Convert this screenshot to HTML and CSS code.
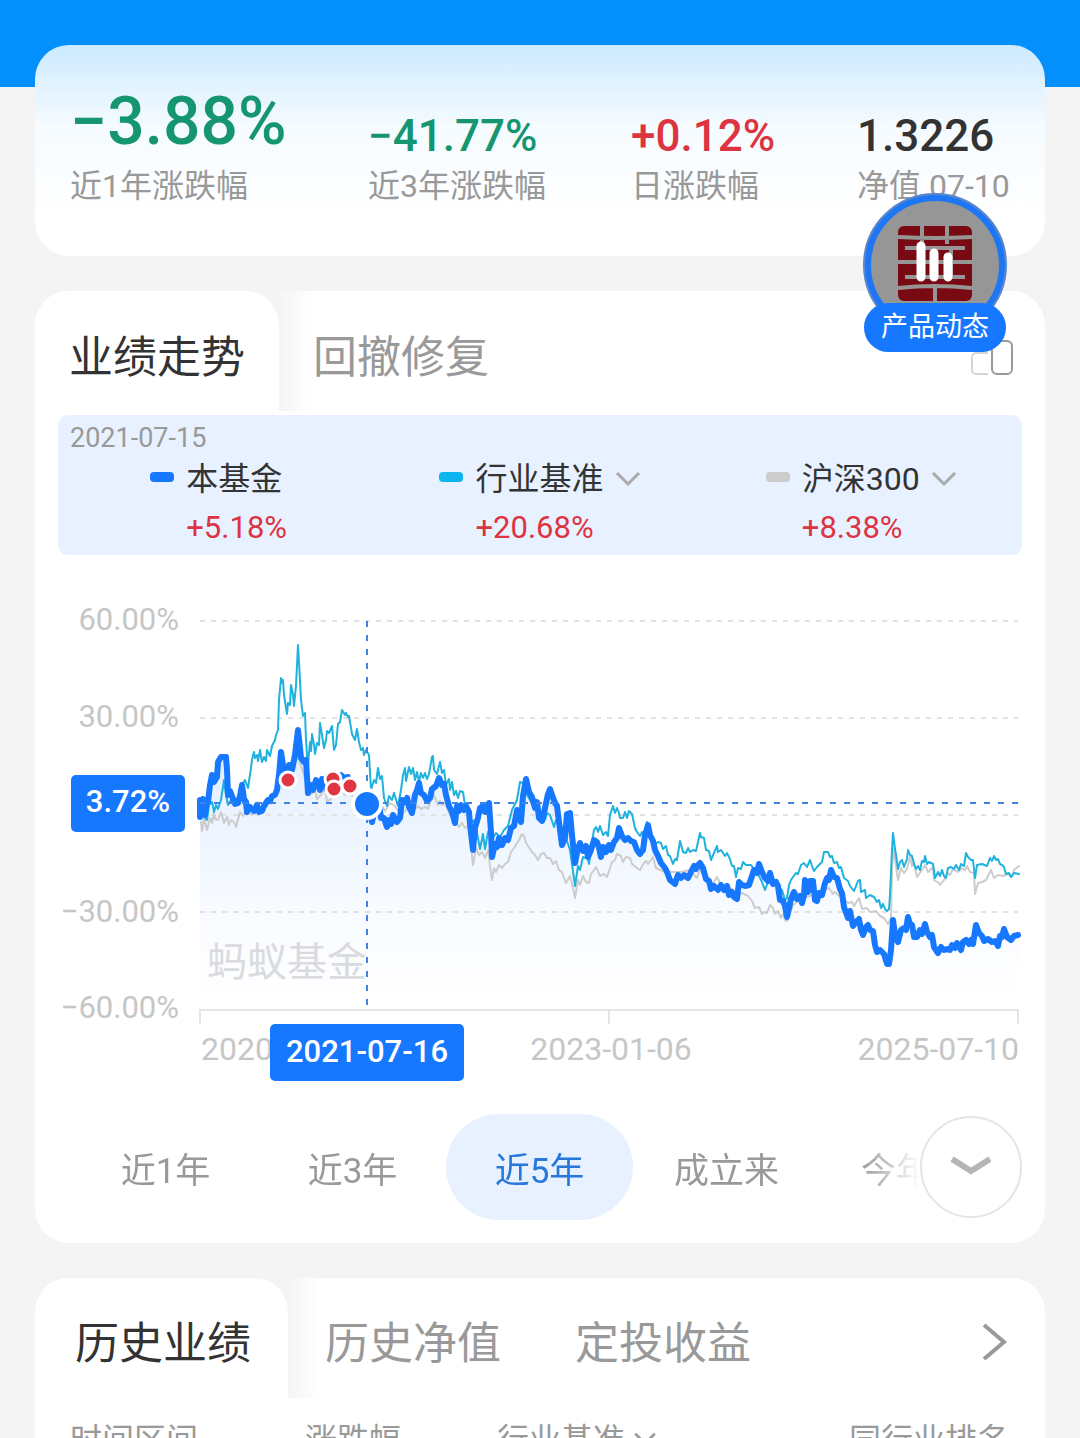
FILE: index.html
```html
<!DOCTYPE html>
<html lang="zh-CN">
<head>
<meta charset="utf-8">
<meta name="viewport" content="width=device-width, initial-scale=1">
<title>基金业绩</title>
<link rel="stylesheet" href="styles.css">
</head>
<body>
<main class="page">
  <section class="card summary">
    <dl class="metrics">
      <div class="metric">
        <dd class="metric-value metric-value-lead down">−3.88%</dd>
        <dt class="metric-label">近1年涨跌幅</dt>
      </div>
      <div class="metric">
        <dd class="metric-value down">−41.77%</dd>
        <dt class="metric-label">近3年涨跌幅</dt>
      </div>
      <div class="metric">
        <dd class="metric-value up">+0.12%</dd>
        <dt class="metric-label">日涨跌幅</dt>
      </div>
      <div class="metric">
        <dd class="metric-value">1.3226</dd>
        <dt class="metric-label">净值 07-10</dt>
      </div>
    </dl>
  </section>

  <section class="card trend">
    <header class="tabs">
      <button class="tab tab-active" type="button">业绩走势</button>
      <button class="tab" type="button">回撤修复</button>
      <button class="tabs-action" type="button" aria-label="横屏查看">
        <svg width="42" height="38" viewBox="0 0 42 38" fill="none">
          <path d="M17 14H5a4 4 0 0 0-4 4v13a4 4 0 0 0 4 4h12" stroke="#d6d6d6" stroke-width="2"/>
          <rect x="21" y="2" width="20" height="33" rx="5" stroke="#999" stroke-width="2"/>
        </svg>
      </button>
    </header>

    <div class="legend">
      <time class="legend-date">2021-07-15</time>
      <div class="legend-items">
        <div class="legend-item">
          <span class="swatch swatch-fund"></span>
          <span class="legend-name">本基金</span>
          <span class="legend-value">+5.18%</span>
        </div>
        <div class="legend-item">
          <span class="swatch swatch-industry"></span>
          <button class="legend-name" type="button">行业基准
            <svg width="26" height="18" viewBox="0 0 26 18" fill="none"><path d="M2 3l11 11L24 3" stroke="#aaa" stroke-width="3"/></svg>
          </button>
          <span class="legend-value">+20.68%</span>
        </div>
        <div class="legend-item">
          <span class="swatch swatch-index"></span>
          <button class="legend-name" type="button">沪深300
            <svg width="26" height="18" viewBox="0 0 26 18" fill="none"><path d="M2 3l11 11L24 3" stroke="#aaa" stroke-width="3"/></svg>
          </button>
          <span class="legend-value">+8.38%</span>
        </div>
      </div>
    </div>

    <svg class="chart" viewBox="35 555 1010 545" role="img" aria-label="近5年业绩走势">
      <defs>
        <linearGradient id="area" gradientUnits="userSpaceOnUse" x1="0" y1="730" x2="0" y2="1000">
          <stop offset="0" stop-color="#1677ff" stop-opacity=".13"/>
          <stop offset=".6" stop-color="#1677ff" stop-opacity=".04"/>
          <stop offset="1" stop-color="#1677ff" stop-opacity="0"/>
        </linearGradient>
      </defs>
      <path class="chart-area" d="M200 1000V810L205 800 210 785 219 762 226 757 229 795 235 805 242 785 246 808 262 808 277 792 281 752 287 775 298 728 303 758 308 792 322 779 341 775 354 795 367 803 372 820 379 795 387 826 401 815 408 797 419 783 428 800 439 777 455 822 468 808 473 848 489 803 492 856 508 836 526 779 542 820 550 788 562 845 569 813 575 862 600 850 619 828 640 854 648 825 675 884 700 864 712 888 737 898 742 884 759 864 777 885 787 917 806 880 816 900 831 870 854 926 873 930 888 964 893 920 908 917 925 924 939 952 965 940 976 925 997 946 1004 929 1018 935V1000Z"/>
      <g class="chart-grid">
        <path d="M200 621H1018M200 718H1018M200 815H1018M200 912H1018M200 1010H1018"/>
      </g>
      <path class="chart-ticks" d="M200 1024V1010H1018V1024M609 1010V1024"/>
      <text class="chart-watermark" x="207" y="976">蚂蚁基金</text>
      <polyline class="line-index" points="201,822 202,831 204,819 205,822 207,830 210,818 212,823 214,813 215,819 218,820 221,812 224,823 227,817 229,825 231,820 234,822 236,827 240,812 243,816 246,811 252,815 258,810 270,800 280,780 290,770 298,757 304,775 310,795 315,790 317,799 320,796 325,789 327,801 330,800 335,793 338,797 340,788 345,795 350,792 355,800 360,795 366,808 370,815 380,803 385,811 390,803 395,806 401,815 408,808 412,812 418,806 421,809 425,807 428,809 430,802 434,795 438,805 440,801 442,805 445,803 450,815 456,822 459,827 462,823 465,828 468,826 470,840 473,865 476,848 479,855 482,852 485,858 488,850 490,866 492,880 494,868 496,872 499,865 502,868 505,864 508,862 511,852 514,848 519,840 522,834 524,836 526,843 532,852 535,855 538,860 541,854 544,853 547,858 550,858 553,864 556,861 559,870 562,872 564,878 566,883 570,876 573,888 575,898 578,880 580,885 583,876 586,882 589,883 591,874 594,870 596,867 600,876 604,874 607,877 610,868 612,862 615,860 617,854 621,856 623,862 626,857 630,858 632,864 637,868 640,870 644,863 646,861 648,864 653,857 656,868 665,872 680,872 690,870 694,875 697,878 700,869 702,873 710,885 714,882 717,877 720,883 725,887 732,889 736,896 742,893 748,896 752,901 755,908 759,907 762,914 765,912 767,913 770,905 773,908 775,914 778,911 781,918 783,914 785,920 787,921 793,905 800,900 812,895 818,893 822,896 825,890 829,888 833,894 835,892 842,898 848,903 852,902 854,906 857,901 859,898 862,909 867,908 870,912 876,911 880,916 884,918 888,924 891,918 892,870 893,848 896,866 898,880 901,868 904,873 907,869 910,857 912,866 914,863 917,877 922,870 925,865 928,872 933,867 934,880 939,883 940,885 944,880 948,873 950,875 953,869 958,872 962,868 965,870 967,866 970,872 974,873 975,894 978,883 982,882 986,880 988,876 991,870 994,878 998,875 1003,876 1008,874 1012,877 1014,870 1019,866"/>
      <polyline class="line-industry" points="201,810 205,818 207,820 209,805 212,802 214,812 216,805 218,809 221,800 224,780 226,795 228,805 232,798 236,800 240,795 243,783 245,780 248,788 251,768 252,760 254,752 255,758 257,755 258,761 260,750 262,762 264,757 266,761 267,750 270,756 272,746 275,740 276,735 278,730 279,700 281,678 282,683 283,680 284,695 287,714 288,703 290,705 291,685 293,695 294,706 296,686 298,645 299,662 301,700 303,716 305,713 306,740 307,755 308,765 310,742 311,751 312,734 314,745 315,754 317,743 319,745 320,723 322,735 324,748 326,740 327,731 329,733 332,726 334,750 336,745 338,724 340,722 342,710 345,715 346,713 348,717 349,716 352,734 355,740 357,729 359,742 361,750 363,748 364,755 366,750 369,755 371,790 374,780 376,783 378,768 380,779 382,776 384,798 387,806 389,796 392,800 394,793 398,806 401,790 403,775 405,768 406,781 409,767 411,774 413,768 415,780 417,772 419,782 421,773 423,778 425,773 427,779 429,774 432,757 433,756 434,770 437,774 440,762 442,773 444,770 446,785 449,779 450,790 452,782 454,795 456,791 458,798 460,791 463,792 465,805 468,808 470,825 474,820 477,833 480,849 483,834 485,849 488,832 490,829 493,838 496,833 500,837 504,830 508,826 512,810 517,800 520,782 523,783 527,795 533,805 540,813 545,820 547,813 550,815 554,827 556,820 560,822 566,838 570,850 572,864 575,886 578,866 580,870 583,857 585,858 587,855 589,864 592,842 594,830 596,827 598,832 600,826 603,835 606,832 608,836 610,815 613,806 615,813 617,808 619,813 620,818 623,818 625,812 627,818 629,811 632,814 635,828 637,832 640,836 642,832 645,834 647,822 652,838 654,845 658,842 661,843 663,849 666,846 668,855 670,856 673,864 675,859 677,860 680,841 683,852 686,853 688,848 690,852 693,850 696,851 698,842 700,833 701,837 704,838 706,850 709,851 711,860 714,853 717,846 718,852 721,850 723,853 725,856 727,853 730,859 732,866 734,866 736,877 738,868 741,869 743,862 746,865 751,865 753,868 757,868 759,876 762,882 765,890 768,882 775,885 782,890 785,900 787,898 789,885 791,880 793,877 796,873 798,874 801,865 804,863 807,867 810,860 812,866 814,871 817,867 820,864 822,862 824,852 828,852 830,857 832,856 834,863 837,862 839,868 841,867 844,878 848,881 850,886 854,891 858,881 860,880 861,892 865,890 866,898 870,895 874,897 877,902 879,900 881,908 883,904 885,909 887,911 889,909 890,895 892,850 893,833 895,849 896,855 898,869 900,862 902,860 904,867 907,859 908,850 910,855 912,856 914,864 916,869 918,866 920,870 922,861 924,862 925,856 927,864 929,862 933,864 935,878 938,872 940,876 942,870 944,876 946,878 948,868 951,867 954,869 956,865 959,870 961,864 964,866 966,853 968,857 971,860 973,860 975,878 977,865 982,864 987,866 990,858 992,861 994,856 996,860 998,859 1000,864 1002,865 1004,867 1006,874 1009,873 1011,877 1014,873 1019,874"/>
      <polyline class="line-fund" points="200,817 200,800 202,812 203,799 205,815 207,801 208,802 210,785 212,775 214,782 217,777 218,762 221,757 226,757 227,770 228,795 230,791 232,796 235,804 238,803 240,796 242,785 244,799 246,802 247,812 250,807 254,811 257,805 259,812 262,811 264,806 268,800 270,801 272,796 275,795 277,790 279,775 281,752 283,765 285,775 287,775 289,765 292,770 295,755 298,730 300,748 301,758 304,762 306,760 308,793 311,785 313,790 316,780 318,784 320,790 322,779 326,788 330,782 334,785 338,782 341,775 344,778 348,777 351,788 354,792 360,795 367,803 372,822 378,797 381,818 384,818 387,827 389,820 391,824 393,815 397,822 400,818 402,800 405,802 407,798 409,807 412,813 415,795 417,790 419,783 421,793 424,795 427,801 430,798 432,789 436,786 439,778 442,785 444,784 446,795 449,806 452,812 455,823 457,806 459,811 461,805 464,810 466,806 469,812 470,824 473,850 475,828 478,818 480,808 483,806 485,812 488,810 489,803 491,832 492,857 495,844 497,847 499,838 502,845 505,838 508,840 511,828 514,826 517,810 519,813 521,822 523,796 526,779 529,792 532,797 535,808 537,802 539,818 542,821 545,808 548,794 550,789 552,795 555,803 557,806 559,822 562,845 565,838 567,814 570,813 572,835 575,863 578,848 580,843 583,851 586,846 588,857 591,850 594,840 597,842 599,848 601,857 603,847 606,852 609,845 611,850 614,842 617,838 619,828 622,836 625,840 628,838 631,841 634,842 637,850 640,854 643,850 645,835 648,825 650,835 653,841 655,850 658,856 661,863 665,868 667,872 670,880 675,884 678,875 681,878 684,875 688,878 691,872 694,866 696,869 698,865 700,863 703,868 706,879 709,881 711,889 714,886 718,890 721,885 724,890 727,886 729,895 732,892 734,897 737,899 739,882 742,885 745,886 749,885 752,876 754,870 757,873 759,864 762,872 765,878 768,881 770,873 773,884 776,882 778,886 780,900 783,901 785,906 787,917 789,908 791,899 794,892 797,899 800,896 802,903 804,895 805,880 808,892 810,881 813,881 815,900 817,901 819,893 822,895 825,883 827,878 829,880 831,870 834,877 837,878 840,889 842,893 844,907 848,918 850,911 853,926 856,922 859,919 861,930 863,935 866,927 868,925 870,930 873,931 875,945 877,952 880,950 884,954 887,964 889,964 891,950 893,920 895,935 898,942 901,930 904,928 906,930 908,917 910,924 912,925 914,937 917,937 920,930 922,934 925,924 927,932 930,937 932,935 934,947 938,953 941,947 944,950 947,949 950,950 952,945 955,948 957,943 961,950 963,942 966,940 969,944 971,940 973,944 976,925 979,933 982,936 984,941 988,939 992,942 995,941 998,946 1000,936 1002,937 1004,929 1007,937 1011,940 1014,936 1018,935"/>
      <path class="chart-cursor" d="M200 803H1018M367 621V1010"/>
      <g class="trade-dots">
        <circle cx="288" cy="780" r="8"/>
        <circle cx="333" cy="779" r="8"/>
        <circle cx="350" cy="786" r="8"/>
        <circle cx="334" cy="789" r="8"/>
      </g>
      <circle class="cursor-dot" cx="367" cy="804" r="14"/>
      <g class="axis-y">
        <text x="179" y="630">60.00%</text>
        <text x="179" y="727">30.00%</text>
        <text x="179" y="922">−30.00%</text>
        <text x="179" y="1018">−60.00%</text>
      </g>
      <g class="axis-x">
        <text x="201" y="1060">2020-07-10</text>
        <text x="611" y="1060" text-anchor="middle">2023-01-06</text>
        <text x="1019" y="1060" text-anchor="end">2025-07-10</text>
      </g>
      <rect class="tip" x="71" y="775" width="114" height="57" rx="5"/>
      <text class="tip-value" x="128" y="812">3.72%</text>
      <rect class="tip" x="270" y="1024" width="194" height="57" rx="5"/>
      <text class="tip-date" x="367" y="1062">2021-07-16</text>
    </svg>

    <div class="ranges">
      <div class="range-list">
        <button class="range" type="button">近1年</button>
        <button class="range" type="button">近3年</button>
        <button class="range range-active" type="button">近5年</button>
        <button class="range" type="button">成立来</button>
        <button class="range" type="button">今年来</button>
      </div>
      <button class="range-more" type="button" aria-label="更多区间">
        <svg width="40" height="24" viewBox="0 0 40 24" fill="none"><path d="M1 4l19 12L39 4" stroke="#b5b5b5" stroke-width="6"/></svg>
      </button>
    </div>
  </section>

  <section class="card history">
    <header class="tabs">
      <button class="tab tab-active" type="button">历史业绩</button>
      <button class="tab" type="button">历史净值</button>
      <button class="tab" type="button">定投收益</button>
      <a class="tabs-action" href="#history" aria-label="查看全部">
        <svg width="28" height="38" viewBox="0 0 28 38" fill="none"><path d="M1 2l20 17L1 36" stroke="#999" stroke-width="4"/></svg>
      </a>
    </header>
    <table class="history-table" id="history">
      <thead>
        <tr>
          <th class="col-period">时间区间</th>
          <th class="col-change">涨跌幅</th>
          <th>行业基准 <svg width="24" height="16" viewBox="0 0 26 18" fill="none"><path d="M2 3l11 11L24 3" stroke="#999" stroke-width="3"/></svg></th>
          <th class="col-rank">同行业排名</th>
        </tr>
      </thead>
    </table>
  </section>

  <button class="feed" type="button">
    <svg class="feed-avatar" viewBox="0 0 144 144">
      <circle cx="72" cy="72" r="71" fill="#969696" stroke="#5c86c9" stroke-width="2"/>
      <circle cx="72" cy="72" r="67" fill="none" stroke="#1c76f5" stroke-width="6"/>
      <rect x="35" y="33" width="74" height="75" rx="6" fill="#790a13"/>
      <path d="M59 33v18M84 33v18M35 44q37 2 74 0M42 55h60M35 69h74M42 84h60M35 95q37-4 74 0M72 94v14M57 55v29M88 55v29" stroke="#969696" stroke-width="4" fill="none"/>
      <path d="M58 53v31M71 60v24M85 64v20" stroke="#fff" stroke-width="9" stroke-linecap="round"/>
    </svg>
    <span class="feed-label">产品动态</span>
  </button>
</main>
</body>
</html>
```
FILE: styles.css
```css
* {
  box-sizing: border-box;
}

:root {
  --blue: #1677ff;
  --ink: #333;
  --muted: #999;
  --tint: #e7f1ff;
  --surface: #f4f4f4;
}

body {
  margin: 0;
  height: 100vh;
  overflow: hidden;
  background: linear-gradient(#0390fc, #0390fc) top / 100% 87px no-repeat var(--surface);
  color: var(--ink);
  font-family: Roboto, "Noto Sans CJK SC", sans-serif;
  font-size: 32px;
}

button {
  margin: 0;
  padding: 0;
  border: 0;
  background: none;
  color: inherit;
  font: inherit;
}

svg {
  display: block;
}

.page {
  position: relative;
  display: flex;
  flex-direction: column;
  gap: 35px;
  padding: 45px 35px 0;
}

.card {
  border-radius: 34px;
  background: #fff;
}

/* Headline figures */

.summary {
  padding: 35px 35px 48px;
  background: linear-gradient(#cdeaff, #f5fbff 38%, #fff 80%);
}

.metrics {
  display: grid;
  grid-template-columns: 298fr 263fr 226fr 153fr;
  align-items: end;
  margin: 0;
}

.metric {
  display: flex;
  flex-direction: column;
  white-space: nowrap;
}

.metric-value {
  margin: 0;
  font-size: 44px;
  font-weight: 500;
  line-height: 56px;
}

.metric-value-lead {
  font-size: 66px;
  line-height: 84px;
}

.metric-label {
  color: var(--muted);
  line-height: 44px;
}

.down {
  color: #159570;
}

.up {
  color: #dc3440;
}

/* Tabs */

.tabs {
  display: flex;
  align-items: center;
  height: 124px;
}

.tab {
  align-self: stretch;
  padding: 2px 34px 0;
  color: var(--muted);
  font-size: 44px;
  white-space: nowrap;
}

.tab-active {
  position: relative;
  z-index: 0;
  color: var(--ink);
}

.tab-active::before,
.tab-active::after {
  content: "";
  position: absolute;
  top: 0;
  bottom: 4px;
}

.tab-active::before {
  z-index: -2;
  right: -32px;
  width: 66px;
  background: linear-gradient(to right, var(--surface) 50%, #fff);
}

.tab-active::after {
  z-index: -1;
  left: 0;
  right: 0;
  border-radius: 34px 34px 0 0;
  background: #fff;
}

.tabs-action {
  margin-left: auto;
  margin-right: 32px;
  padding-top: 10px;
}

.history .tab {
  padding: 0 37px;
}

.history .tab-active {
  padding-left: 40px;
}

.history .tabs-action {
  margin-right: 34px;
  padding-top: 4px;
}

/* Legend */

.legend {
  margin: 0 23px;
  padding: 5px 0 1px;
  border-radius: 10px;
  background: var(--tint);
}

.legend-date {
  display: block;
  padding-left: 12px;
  color: var(--muted);
  font-size: 27px;
  line-height: 36px;
}

.legend-items {
  display: grid;
  grid-template-columns: repeat(3, 1fr);
}

.legend-item {
  display: grid;
  grid-template-columns: 24px auto;
  column-gap: 12px;
  align-items: center;
  justify-content: center;
}

.legend-name {
  display: flex;
  align-items: center;
  gap: 11px;
  line-height: 46px;
}

.legend-value {
  grid-column: 2;
  color: #dc3440;
  font-size: 31px;
  line-height: 52px;
}

.swatch {
  height: 10px;
  margin-bottom: 4px;
  border-radius: 4px;
}

.swatch-fund {
  background: var(--blue);
}

.swatch-industry {
  background: #0db5ee;
}

.swatch-index {
  background: #ccc;
}

/* Chart */

.chart {
  width: 100%;
  height: auto;
}

.chart-area {
  fill: url(#area);
}

.chart-grid {
  fill: none;
  stroke: #e2e2e2;
  stroke-width: 2;
  stroke-dasharray: 5 6;
}

.chart-ticks {
  fill: none;
  stroke: #e6e6e6;
  stroke-width: 2;
}

.chart-watermark {
  fill: #dadbde;
  font-size: 40px;
}

.line-index,
.line-industry,
.line-fund {
  fill: none;
  stroke-linejoin: round;
  stroke-linecap: round;
}

.line-index {
  stroke: #ccc;
  stroke-width: 2;
}

.line-industry {
  stroke: #1fb2dc;
  stroke-width: 2;
}

.line-fund {
  stroke: var(--blue);
  stroke-width: 6;
}

.chart-cursor {
  fill: none;
  stroke: #3f83e6;
  stroke-width: 2;
  stroke-dasharray: 6 8;
}

.trade-dots {
  fill: #e03644;
  stroke: #fff;
  stroke-width: 3;
}

.cursor-dot {
  fill: var(--blue);
  stroke: #fff;
  stroke-width: 4;
}

.axis-y,
.axis-x {
  fill: #c6c6c6;
}

.axis-y {
  font-size: 31px;
  text-anchor: end;
}

.axis-x {
  font-size: 32px;
}

.tip {
  fill: var(--blue);
}

.tip-value,
.tip-date {
  fill: #fff;
  font-size: 31px;
  font-weight: 500;
  text-anchor: middle;
}

/* Range picker */

.ranges {
  display: flex;
  align-items: center;
  padding: 14px 23px 23px 37px;
}

.range-list {
  display: flex;
  flex: 1;
  min-width: 0;
  overflow: hidden;
  -webkit-mask-image: linear-gradient(to right, #000 calc(100% - 60px), transparent);
  mask-image: linear-gradient(to right, #000 calc(100% - 60px), transparent);
}

.range {
  flex: none;
  width: 187px;
  height: 106px;
  border-radius: 53px;
  color: var(--muted);
  font-size: 35px;
}

.range-active {
  background: var(--tint);
  color: #2878dc;
}

.range-more {
  display: grid;
  place-items: center;
  flex: none;
  width: 102px;
  height: 102px;
  border: 2px solid #e5e5e5;
  border-radius: 50%;
}

/* History */

.history-table {
  width: 100%;
  border-collapse: collapse;
  table-layout: fixed;
}

.history-table th {
  padding: 16px 0;
  color: var(--muted);
  font-weight: 400;
  line-height: 44px;
  text-align: left;
  white-space: nowrap;
}

.history-table svg {
  display: inline-block;
  vertical-align: 4px;
}

.history-table .col-period {
  width: 270px;
  padding-left: 35px;
}

.history-table .col-change {
  width: 192px;
}

.history-table .col-rank {
  padding-right: 36px;
  text-align: right;
}

/* Floating product feed */

.feed {
  position: absolute;
  top: 193px;
  right: 73px;
  display: flex;
  flex-direction: column;
  align-items: center;
  width: 144px;
}

.feed-avatar {
  width: 144px;
  height: 144px;
}

.feed-label {
  width: 142px;
  margin-top: -34px;
  border-radius: 25px;
  background: var(--blue);
  color: #fff;
  font-size: 27px;
  line-height: 49px;
  text-align: center;
}
```
